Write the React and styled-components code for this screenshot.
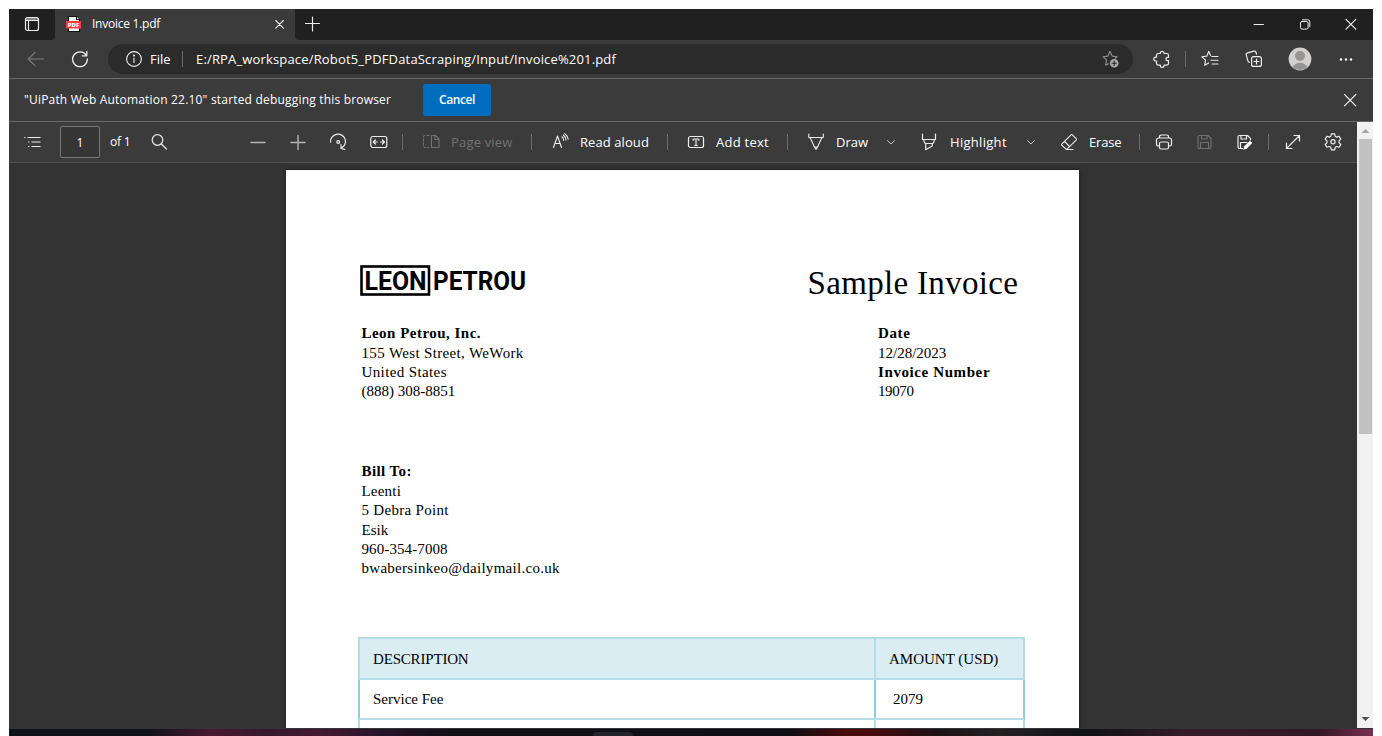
import React from "react";
import styled, { createGlobalStyle } from "styled-components";

const GlobalStyle = createGlobalStyle`
  * { box-sizing: border-box; }
  body { margin: 0; background: #fff; overflow: hidden; }
`;

const Screen = styled.div`
  width: 1382px;
  height: 736px;
  padding: 9px 9px 0;
  font-family: "Open Sans", "Noto Sans", sans-serif;
  color: #fff;
`;
const Window = styled.div`
  display: flex;
  flex-direction: column;
  height: 719px;
  background: #3b3b3b;
`;
const TabStrip = styled.div`
  display: flex;
  height: 31px;
  background: #3b3b3b;
`;
const TabActions = styled.div`
  display: flex;
  align-items: center;
  width: 46px;
  height: 31px;
  padding: 0 0 1px 14px;
  border-bottom-right-radius: 4px;
  background: #202020;
`;
const Tab = styled.div`
  display: flex;
  align-items: center;
  width: 240px;
  height: 31px;
  padding: 0 0 1px 10px;
`;
const StripRest = styled.div`
  display: flex;
  align-items: center;
  flex: 1;
  height: 31px;
  padding: 0 0 1px 9px;
  border-bottom-left-radius: 4px;
  background: #202020;
`;
const NavBar = styled.div`
  display: flex;
  align-items: center;
  height: 38px;
`;
const AddressBar = styled.div`
  display: flex;
  align-items: center;
  width: 1025px;
  height: 30px;
  margin-left: 19px;
  padding-left: 17px;
  border-radius: 15px;
  background: #2b2b2b;
`;
const InfoBar = styled.div`
  display: flex;
  align-items: center;
  height: 43px;
  padding-left: 15px;
  border-top: 1px solid #6a6a6a;
`;
const CancelButton = styled.button`
  width: 68px;
  height: 32px;
  margin-left: 32px;
  padding: 0;
  border: 0;
  border-radius: 2px;
  background: #006cbe;
  color: #fff;
  font: 600 12px/30px "Open Sans", sans-serif;
  letter-spacing: -0.4px;
`;
const Viewer = styled.div`
  display: flex;
  flex: 1;
  min-height: 0;
  border-top: 1px solid #6a6a6a;
`;
const ViewerMain = styled.div`
  display: flex;
  flex-direction: column;
  width: 1348px;
`;
const Toolbar = styled.div`
  display: flex;
  align-items: center;
  height: 41px;
  border-bottom: 1px solid #515151;
`;
const PageInput = styled.div`
  width: 40px;
  height: 32px;
  margin-left: 18px;
  border: 1px solid #767676;
  border-radius: 2px;
  background: #363636;
  font-size: 12px;
  line-height: 31px;
  text-align: center;
`;
const Label = styled.span`
  flex: none;
  width: ${(p) => p.$w}px;
  margin-left: ${(p) => p.$l || 0}px;
  color: ${(p) => (p.$dim ? "#717171" : "#fff")};
  font-size: ${(p) => p.$size || 13}px;
  line-height: 18px;
  letter-spacing: ${(p) => p.$ls || 0}px;
  white-space: nowrap;
`;
const Divider = styled.span`
  flex: none;
  width: 1px;
  height: 16px;
  margin-left: ${(p) => p.$l}px;
  background: #6b6b6b;
`;
const IconSvg = styled.svg`
  flex: none;
  display: block;
  width: ${(p) => p.$w}px;
  height: ${(p) => p.$h}px;
  margin-left: ${(p) => p.$l || 0}px;
  fill: none;
  stroke: ${(p) => p.$color};
  stroke-width: ${(p) => p.$sw};
  stroke-linecap: round;
  stroke-linejoin: round;
`;
const Icon = ({ w = 18, h = 18, l, color = "#ececec", sw = 1.1, children }) => (
  <IconSvg $w={w} $h={h} $l={l} $color={color} $sw={sw} viewBox={`0 0 ${w} ${h}`}>
    {children}
  </IconSvg>
);

const Canvas = styled.div`
  display: flex;
  justify-content: center;
  flex: 1;
  min-height: 0;
  padding: 7px 1px 0 0;
  overflow: hidden;
  background: #333;
`;
const Paper = styled.div`
  width: 793px;
  height: 1122px;
  flex: none;
  padding-top: 95px;
  background: #fff;
  box-shadow: 0 0 4px rgba(0, 0, 0, 0.5);
  color: #000;
  font-family: "Liberation Serif", serif;
`;
const PaperHeader = styled.div`
  display: flex;
  height: 36px;
  padding-left: 74px;
`;
const Title = styled.div`
  margin-left: 271.5px;
  font-size: 33px;
  line-height: 36px;
  letter-spacing: 0.33px;
  white-space: nowrap;
`;
const Meta = styled.div`
  display: flex;
  margin-top: 23px;
  padding-left: 75.5px;
`;
const Block = styled.div`
  width: ${(p) => p.$w}px;
  height: ${(p) => p.$h}px;
  margin: ${(p) => p.$m || 0};
`;
const Line = styled.div`
  margin-bottom: ${(p) => p.$gap || 0}px;
  font-size: 15px;
  line-height: 19px;
  font-weight: ${(p) => (p.$bold ? 700 : 400)};
  letter-spacing: ${(p) => p.$ls || 0}px;
  white-space: nowrap;
`;
const Table = styled.div`
  width: 667px;
  margin: 58px 0 0 72px;
  border-top: 2px solid #b5dce8;
`;
const Row = styled.div`
  display: flex;
  height: ${(p) => (p.$head ? 41 : 40)}px;
  border: solid ${(p) => (p.$strong ? "#92cddc" : "#b5dce8")};
  border-width: 0 2px 2px;
  border-bottom-color: #b5dce8;
  background: ${(p) => (p.$head ? "#daedf3" : "#fff")};
`;
const Cell = styled.div`
  width: ${(p) => (p.$amount ? 149 : 514)}px;
  padding-left: ${(p) => p.$pad || 13}px;
  border-left: ${(p) => (p.$amount ? (p.$strong ? "2px solid #92cddc" : "2px solid #b5dce8") : "0")};
  font-size: 15px;
  line-height: ${(p) => p.$lh || 39}px;
  letter-spacing: ${(p) => p.$ls || 0}px;
`;

const ScrollBar = styled.div`
  display: flex;
  flex-direction: column;
  align-items: center;
  width: 16px;
  background: #f1f1f1;
`;
const Thumb = styled.div`
  width: 13px;
  height: 295px;
  margin-bottom: auto;
  background: #c1c1c1;
`;
const Taskbar = styled.div`
  display: flex;
  align-items: flex-end;
  height: 8px;
  padding-left: 584px;
  border-top: 1px solid #34343a;
  background: linear-gradient(
    90deg,
    #101317 0, #101317 140px, #49192f 200px, #35182a 260px, #451a30 310px,
    #26142a 370px, #0f0f14 450px, #0e0e14 780px, #480a0c 835px, #4a0a0c 860px,
    #1c1216 925px, #232022 990px, #101214 1080px, #351d26 1180px, #341724 1310px,
    #7a3052 1364px
  );
`;
const TaskItem = styled.div`
  width: 40px;
  height: 4px;
  border-radius: 4px 4px 0 0;
  background: #232429;
`;

const Chevron = ({ l }) => (
  <Icon w={10} h={10} l={l} color="#c4c4c4" sw={1}>
    <path d="M1.5 3.6 5 7l3.5-3.4" />
  </Icon>
);

const Tabs = () => (
  <TabStrip>
    <TabActions>
      <Icon l={0} sw={1.2}>
        <rect x="2.5" y="2.5" width="13" height="13" rx="2" />
        <path d="M3 4h12M3 5.5h12M5.5 6v9" />
      </Icon>
    </TabActions>
    <Tab>
      <Icon l={0}>
        <path d="M3.5 1.5h8l3 3v12h-11z" fill="#f5f5f5" stroke="#111" />
        <path d="M11.5 1.5v3h3" fill="#fff" stroke="#111" />
        <path d="M1 6h15v7.5H1z" fill="#f93d3d" stroke="none" />
        <text x="8.5" y="12" textAnchor="middle" fontFamily="Open Sans, sans-serif" fontWeight="800" fontSize="5.6" textLength="11.5" lengthAdjust="spacingAndGlyphs" fill="#fff" stroke="none">PDF</text>
      </Icon>
      <Label $w={68} $l={9} $size={12} $ls={-0.25}>Invoice 1.pdf</Label>
      <Icon w={10} h={10} l={115} sw={1.1}>
        <path d="M0.8 1.5l7.6 7.6M8.4 1.5 0.8 9.1" />
      </Icon>
    </Tab>
    <StripRest>
      <Icon l={0} sw={1.2}>
        <path d="M8.5 2v14M1.5 8.5h14" />
      </Icon>
      <Icon w={12} h={12} l={931} sw={1}>
        <path d="M1 6.5h9.5" />
      </Icon>
      <Icon w={12} h={12} l={34} sw={1}>
        <rect x="1.5" y="3.5" width="7.6" height="7.6" rx="1.5" />
        <path d="M3.5 1.8h5.3a2 2 0 0 1 2 2v5" />
      </Icon>
      <Icon w={12} h={12} l={34} sw={1.2}>
        <path d="M1 1.3l9.8 9.8M10.8 1.3 1 11.1" />
      </Icon>
    </StripRest>
  </TabStrip>
);

const Nav = () => (
  <NavBar>
    <Icon l={18} color="#7d7d7d">
      <path d="M16.5 9H1.7M8 2.3 1.3 9 8 15.7" />
    </Icon>
    <Icon l={26} sw={1.3}>
      <path d="M15.2 5.2A7.4 7.4 0 1 0 16.4 9" />
      <path d="M15.8 1.5v4.3h-4.5" />
    </Icon>
    <AddressBar>
      <Icon l={0}>
        <circle cx="9" cy="9" r="7.4" />
        <path d="M9 8v4.5" />
        <circle cx="9" cy="5.6" r=".5" fill="#ececec" />
      </Icon>
      <Label $w={21} $l={7}>File</Label>
      <Divider $l={11} />
      <Label $w={421} $l={13} $ls={0.163}>E:/RPA_workspace/Robot5_PDFDataScraping/Input/Invoice%201.pdf</Label>
      <Icon w={19} l={484} color="#919191">
        <path d="M9 1.5 6.9 6.1 2 6.7 5.6 10.1 4.7 15.2 7.4 13.7" />
        <path d="M9 1.5l2.2 4.6 5 .6-2 1.8" />
        <circle cx="13.2" cy="13.2" r="4.3" fill="#a9a9a9" stroke="none" />
        <path d="M13.2 11v4.4M11 13.2h4.4" stroke="#2b2b2b" />
      </Icon>
    </AddressBar>
    <Icon l={20} sw={1.2}>
      <path d="M3.5 7.2V5.3a1.8 1.8 0 0 1 1.8-1.8h2V3.2a1.9 1.9 0 0 1 3.8 0v.3h2.600a1.8 1.8 0 0 1 1.8 1.8v2h-.9a1.700 1.700 0 0 0 0 3.400h.9v2.600a1.8 1.8 0 0 1-1.800 1.800h-2.600v.3a1.900 1.900 0 0 1-3.800 0v-.3h-2a1.8 1.8 0 0 1-1.800-1.800v-2.300h-.8a1.900 1.900 0 0 1 0-3.800z" />
    </Icon>
    <Divider $l={14} />
    <Icon l={15}>
      <path d="M7.7 1.5 5.8 6.1.9 6.8l3.7 3.3-1 5.2 4.1-2.3" />
      <path d="M7.7 1.5l1.9 3.9M10.8 6.5H17M10 10.2h7M11.3 14h5.7" />
    </Icon>
    <Icon l={26} sw={1.2}>
      <rect x="6.6" y="6.6" width="9.8" height="9.8" rx="2" />
      <path d="M11.5 9v5M9 11.5h5" />
      <path d="M4.3 12.3a2 2 0 0 1-1.4-1.5L1.3 5.2a2 2 0 0 1 1.4-2.4l6-1.6a2 2 0 0 1 2.4 1.3l.4 1.6" />
    </Icon>
    <Icon w={24} h={24} l={25}>
      <circle cx="12" cy="12" r="11.4" fill="#d2d0ce" stroke="none" />
      <circle cx="12" cy="9" r="5" fill="#979593" stroke="none" />
      <path d="M4.6 20.3c1.6-3 4.3-4.6 7.4-4.6s5.8 1.6 7.4 4.6A11.4 11.4 0 0 1 4.6 20.3z" fill="#979593" stroke="none" />
    </Icon>
    <Icon l={25}>
      <g fill="#fff" stroke="none">
        <circle cx="4" cy="9.5" r="1.2" />
        <circle cx="9" cy="9.5" r="1.2" />
        <circle cx="14" cy="9.5" r="1.2" />
      </g>
    </Icon>
  </NavBar>
);

const Tools = () => (
  <Toolbar>
    <Icon l={15} sw={1.1}>
      <path d="M3.5 4.5h13M7.5 9h9M7.5 13.5h9" strokeLinecap="butt" />
      <path d="M.7 4.5h.4M4.6 9h.4M4.6 13.5h.4" />
    </Icon>
    <PageInput>1</PageInput>
    <Label $w={21} $l={10} $size={12} $ls={-0.2}>of 1</Label>
    <Icon l={20} sw={1.2}>
      <circle cx="6.5" cy="7" r="5.3" />
      <path d="M10.4 11l5 5" />
    </Icon>
    <Icon l={80} sw={1.4} color="#b4b4b4">
      <path d="M2 9.5h14" />
    </Icon>
    <Icon l={22} sw={1.4} color="#b4b4b4">
      <path d="M2 9.5h14M9 2.5v14" />
    </Icon>
    <Icon l={22} sw={1.2}>
      <path d="M1.5 9a7.5 7.3 0 1 1 10.8 6" />
      <path d="M12 11.5v4l3.8.8" />
      <circle cx="9.2" cy="9" r="1.4" />
    </Icon>
    <Icon l={23} sw={1.2}>
      <rect x="0.8" y="3.5" width="16" height="11" rx="2" />
      <path d="M3.5 9h3.8M10.5 9h3.8M5.4 7 3.3 9l2.1 2M12.4 7l2.1 2-2.1 2" />
    </Icon>
    <Divider $l={14} />
    <Icon l={19} color="#717171">
      <path d="M9.5 2.5h4L17 6v8.5H9.500zM13 2.8v3.700h4" />
      <path d="M7 2.5H3A1.5 1.5 0 0 0 1.5 4v9A1.5 1.5 0 0 0 3 14.5h4" strokeDasharray="2 2" />
    </Icon>
    <Label $w={62} $l={11} $ls={0.18} $dim>Page view</Label>
    <Divider $l={18} />
    <Icon l={20}>
      <path d="M1.5 14.5 5.5 3l4 11.5M2.9 10.5h5.2" />
      <path d="M10 3.8a4 4 0 0 1 1.5 3.7M11.3 2a6.5 6.5 0 0 1 2.6 5M12.8.7a8.5 8.5 0 0 1 3.300 5.500" />
    </Icon>
    <Label $w={69} $l={10} $ls={0.08}>Read aloud</Label>
    <Divider $l={18} />
    <Icon l={19} sw={1.2}>
      <rect x="1.5" y="3.5" width="15" height="11" rx="2" />
      <path d="M6.2 7.3V6h5.6v1.3M9 6v6.5M7.7 12.5h2.6" />
    </Icon>
    <Label $w={53} $l={11} $ls={0.26}>Add text</Label>
    <Divider $l={18} />
    <Icon l={19}>
      <path d="M1.8 1v3.5h14.5V1" />
      <path d="M3.3 5l4.2 9h3l4.2-9M7.7 14.5 9 16.5l1.3-2" />
    </Icon>
    <Label $w={32} $l={11}>Draw</Label>
    <Chevron l={18} />
    <Icon l={24} sw={1.2}>
      <path d="M2.5 1v5.5h13V1M4 6.7v2l1.3 1.8h7.5l1.300-1.800v-2M5.700 10.700v6l6.500-3.600v-2.400" />
    </Icon>
    <Label $w={57} $l={12} $ls={0.3}>Highlight</Label>
    <Chevron l={19} />
    <Icon l={24}>
      <path d="M1.5 11.3 11 1.8a1 1 0 0 1 1.4 0l3.8 3.9a1 1 0 0 1 0 1.4L7.5 15.7a1.5 1.5 0 0 1-2.1 0L1.5 11.8zM4.500 8.500l5.200 5.200M6.500 16.500H13" />
    </Icon>
    <Label $w={32} $l={11} $ls={-0.2}>Erase</Label>
    <Divider $l={18} />
    <Icon l={15} sw={1.2}>
      <path d="M4.5 5V3.7A1.7 1.7 0 0 1 6.2 2h5.6a1.7 1.7 0 0 1 1.7 1.7V5M4.5 13H3.2a1.7 1.7 0 0 1-1.7-1.7V7a2 2 0 0 1 2-2h11a2 2 0 0 1 2 2v4.3a1.7 1.7 0 0 1-1.7 1.7h-1.3" />
      <rect x="4.5" y="9" width="9" height="7" rx="1.5" />
    </Icon>
    <Icon l={23} color="#717171">
      <path d="M3.5 2.5H12l3 3V14a1.5 1.5 0 0 1-1.5 1.5h-10A1.5 1.5 0 0 1 2 14V4a1.5 1.5 0 0 1 1.5-1.5zM5.5 2.500V6H11V2.500M4.500 15.500v-6h8v6" />
    </Icon>
    <Icon l={22} sw={1.2}>
      <path d="M6.5 15.5h-3A1.5 1.5 0 0 1 2 14V4a1.5 1.5 0 0 1 1.5-1.5h8l3 3V7M5 2.5V6h5.500V2.500M4.500 15.500v-6H11" />
      <path d="M7.3 16.8l1-3.5L14 7.700 16.300 10l-5.600 5.700z" fill="#fff" stroke="none" />
    </Icon>
    <Divider $l={14} />
    <Icon l={15} sw={1.2}>
      <path d="M2.5 15.5l13-13M10 2.5h5.5V8M2.5 10v5.5H8" />
    </Icon>
    <Icon l={22} sw={1.2}>
      <path d="M7.3.8h3.4l.5 2.5 1.5.8 2.4-.8 1.7 2.8L15 7.900v1.800l1.800 1.800-1.700 2.800-2.400-.8-1.500.8-.5 2.500H7.300l-.5-2.500-1.500-.8-2.400.8-1.700-2.800L3 9.700V7.900L1.200 6.100l1.700-2.800 2.400.8 1.500-.8z" />
      <circle cx="9" cy="8.8" r="2.1" />
    </Icon>
  </Toolbar>
);

const Invoice = () => (
  <Paper>
    <PaperHeader>
      <svg width="176" height="36" viewBox="0 0 176 36">
        <rect x="1.5" y="1.5" width="67.5" height="28" fill="none" stroke="#000" strokeWidth="2.6" />
        <g fontFamily="Roboto, sans-serif" fontWeight="700" fontSize="25.6">
          <text x="4.5" y="24.5" textLength="62" lengthAdjust="spacingAndGlyphs">LEON</text>
          <text x="73" y="24.5" textLength="93" lengthAdjust="spacingAndGlyphs">PETROU</text>
        </g>
      </svg>
      <Title>Sample Invoice</Title>
    </PaperHeader>
    <Meta>
      <Block $w={516.5} $h={78}>
        <Line $bold $ls={0.48} $gap={1}>Leon Petrou, Inc.</Line>
        <Line $ls={0.35}>155 West Street, WeWork</Line>
        <Line $ls={0.38}>United States</Line>
        <Line>(888) 308-8851</Line>
      </Block>
      <Block $w={130} $h={78}>
        <Line $bold $ls={0.6} $gap={1}>Date</Line>
        <Line>12/28/2023</Line>
        <Line $bold $ls={0.6}>Invoice Number</Line>
        <Line $ls={-0.4}>19070</Line>
      </Block>
    </Meta>
    <Block $w={300} $h={117} $m="60px 0 0 75.5px">
      <Line $bold $ls={0.4} $gap={1}>Bill To:</Line>
      <Line $ls={0.2}>Leenti</Line>
      <Line $ls={0.3} $gap={1}>5 Debra Point</Line>
      <Line>Esik</Line>
      <Line $ls={0.1}>960-354-7008</Line>
      <Line $ls={0.28}>bwabersinkeo@dailymail.co.uk</Line>
    </Block>
    <Table>
      <Row $head>
        <Cell $ls={-0.18} $lh={40}>DESCRIPTION</Cell>
        <Cell $amount $lh={40}>AMOUNT (USD)</Cell>
      </Row>
      <Row $strong>
        <Cell>Service Fee</Cell>
        <Cell $amount $strong $pad={17}>2079</Cell>
      </Row>
      <Row>
        <Cell />
        <Cell $amount />
      </Row>
    </Table>
  </Paper>
);

export default function App() {
  return (
    <>
      <GlobalStyle />
      <Screen>
        <Window>
          <Tabs />
          <Nav />
          <InfoBar>
            <Label $w={367} $size={12} $ls={0.19}>"UiPath Web Automation 22.10" started debugging this browser</Label>
            <CancelButton>Cancel</CancelButton>
            <Icon w={14} h={14} l={852} sw={1.1}>
              <path d="M1.5 1.5l11.3 11.3M12.8 1.5 1.5 12.8" />
            </Icon>
          </InfoBar>
          <Viewer>
            <ViewerMain>
              <Tools />
              <Canvas>
                <Invoice />
              </Canvas>
            </ViewerMain>
            <ScrollBar>
              <Icon w={16} h={17}>
                <path d="M4.5 11h8l-4-4z" fill="#a3a3a3" stroke="none" />
              </Icon>
              <Thumb />
              <Icon w={16} h={17}>
                <path d="M4.5 6h8l-4 4z" fill="#505050" stroke="none" />
              </Icon>
            </ScrollBar>
          </Viewer>
        </Window>
        <Taskbar>
          <TaskItem />
        </Taskbar>
      </Screen>
    </>
  );
}
